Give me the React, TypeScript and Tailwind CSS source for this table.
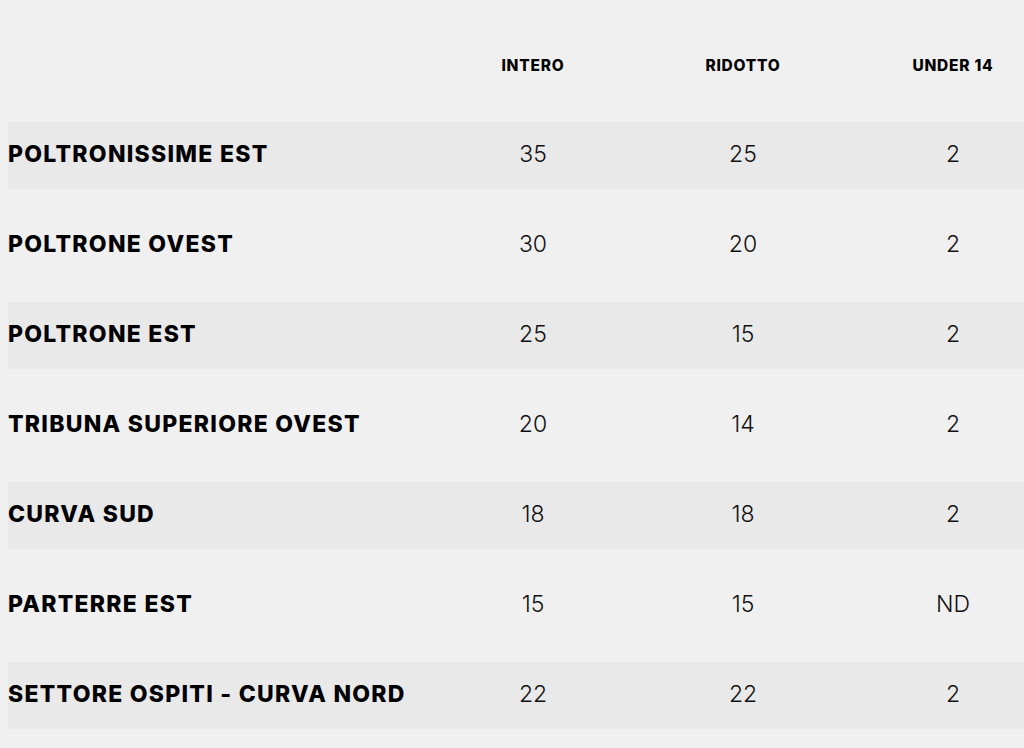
const rows: [string, string, string, string][] = [
  ['POLTRONISSIME EST', '35', '25', '2'],
  ['POLTRONE OVEST', '30', '20', '2'],
  ['POLTRONE EST', '25', '15', '2'],
  ['TRIBUNA SUPERIORE OVEST', '20', '14', '2'],
  ['CURVA SUD', '18', '18', '2'],
  ['PARTERRE EST', '15', '15', 'ND'],
  ['SETTORE OSPITI - CURVA NORD', '22', '22', '2'],
];

export default function App() {
  return (
    <div
      className="w-full h-[748px] overflow-hidden bg-[#f0f0f0] pl-2 pt-[9px]"
      style={{ fontFamily: 'Inter, "Noto Sans", sans-serif' }}
    >
      <table className="w-[1050px] table-fixed border-separate border-spacing-x-0 border-spacing-y-[23px]">
        <colgroup>
          <col className="w-[420px]" />
          <col className="w-[210px]" />
          <col className="w-[210px]" />
          <col className="w-[210px]" />
        </colgroup>
        <thead>
          <tr className="h-[67px]">
            <th />
            <th className="text-center text-[15.5px] font-extrabold text-black tracking-[0.05em]">INTERO</th>
            <th className="text-center text-[15.5px] font-extrabold text-black tracking-[0.05em]">RIDOTTO</th>
            <th className="text-center text-[15.5px] font-extrabold text-black tracking-[0.05em]">UNDER 14</th>
          </tr>
        </thead>
        <tbody>
          {rows.map((r, i) => (
            <tr key={r[0]} className={i % 2 === 0 ? 'h-[67px] bg-[#e9e9e9]' : 'h-[67px]'}>
              <td className="text-left text-[23px] font-extrabold text-black tracking-[0.055em] whitespace-nowrap pb-[3px]">{r[0]}</td>
              <td className="text-center text-[23px] font-light text-[#111] pb-[3px]">{r[1]}</td>
              <td className="text-center text-[23px] font-light text-[#111] pb-[3px]">{r[2]}</td>
              <td className="text-center text-[23px] font-light text-[#111] pb-[3px]">{r[3]}</td>
            </tr>
          ))}
        </tbody>
      </table>
    </div>
  );
}
